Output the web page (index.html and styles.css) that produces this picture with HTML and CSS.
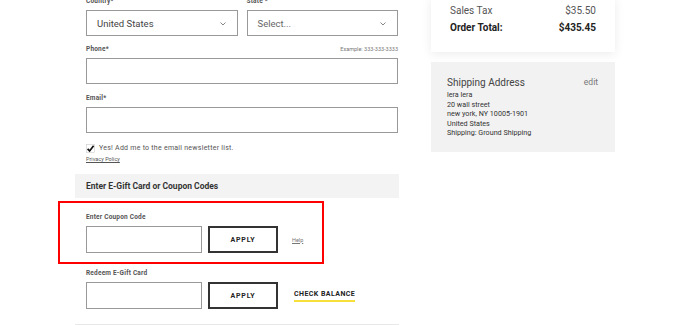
FILE: index.html
```html
<!DOCTYPE html>
<html lang="en">
<head>
    <meta charset="UTF-8">
    <meta name="viewport" content="width=device-width, initial-scale=1.0">
    <title>Checkout</title>
    <link rel="stylesheet" href="styles.css">
</head>
<body>
    <div class="page">
        <div class="checkout">
            <div class="form">
                <div class="row-two">
                    <div class="field">
                        <label>Country*</label>
                        <div class="select">
                            <span>United States</span>
                            <svg class="chev" width="6" height="4" viewBox="0 0 6 4"><polyline points="0.5,0.5 3,3 5.5,0.5" fill="none" stroke="#777" stroke-width="0.9"/></svg>
                        </div>
                    </div>
                    <div class="field">
                        <label>State *</label>
                        <div class="select placeholder">
                            <span>Select...</span>
                            <svg class="chev" width="6" height="4" viewBox="0 0 6 4"><polyline points="0.5,0.5 3,3 5.5,0.5" fill="none" stroke="#777" stroke-width="0.9"/></svg>
                        </div>
                    </div>
                </div>

                <div class="field">
                    <div class="label-row">
                        <label>Phone*</label>
                        <span class="hint">Example: 333-333-3333</span>
                    </div>
                    <div class="input"></div>
                </div>

                <div class="field">
                    <label>Email*</label>
                    <div class="input"></div>
                </div>

                <div class="newsletter">
                    <svg class="check" width="9" height="9" viewBox="0 0 9 9">
                        <rect x="0.5" y="0.5" width="8" height="8" fill="#fff" stroke="#ccc" stroke-width="0.6"/>
                        <path d="M1.6 4.8 L3.6 6.9 L7.6 1.8" fill="none" stroke="#111" stroke-width="1.7"/>
                    </svg>
                    <span>Yes! Add me to the email newsletter list.</span>
                </div>
                <a class="privacy" href="#">Privacy Policy</a>
            </div>

            <div class="band">Enter E-Gift Card or Coupon Codes</div>

            <div class="codes">
                <div class="code-group">
                    <div class="highlight"></div>
                    <label>Enter Coupon Code</label>
                    <div class="code-row">
                        <div class="input code-input"></div>
                        <button class="apply">APPLY</button>
                        <a class="help" href="#">Help</a>
                    </div>
                </div>
                <div class="code-group">
                    <label>Redeem E-Gift Card</label>
                    <div class="code-row">
                        <div class="input code-input"></div>
                        <button class="apply">APPLY</button>
                        <a class="balance" href="#">CHECK BALANCE</a>
                    </div>
                </div>
            </div>
            <div class="divider"></div>
        </div>

        <div class="sidebar">
            <div class="summary">
                <div class="sum-row">
                    <span>Sales Tax</span>
                    <span>$35.50</span>
                </div>
                <div class="sum-row total">
                    <span>Order Total:</span>
                    <span>$435.45</span>
                </div>
            </div>

            <div class="ship">
                <div class="ship-head">
                    <span class="ship-title">Shipping Address</span>
                    <a class="edit" href="#">edit</a>
                </div>
                <div class="ship-lines">
                    <div>lera lera</div>
                    <div>20 wall street</div>
                    <div>new york, NY 10005-1901</div>
                    <div>United States</div>
                    <div>Shipping: Ground Shipping</div>
                </div>
            </div>
        </div>
    </div>
</body>
</html>
```

FILE: styles.css
```css
body {
    margin: 0;
    padding: 0;
    background: #fff;
    color: #333;
    font-family: Roboto, 'Liberation Sans', Arial, sans-serif;
}

.page {
    display: flex;
    gap: 32px;
    margin-top: -3px;
    padding-left: 75px;
}

/* left column */
.checkout {
    width: 324px;
}

.form {
    padding: 0 1px 0 11px;
}

.row-two {
    display: flex;
    gap: 9px;
    margin-bottom: 9px;
}

.row-two .field {
    flex: 1;
    margin-bottom: 0;
}

.field {
    margin-bottom: 10px;
}

label {
    display: block;
    font-size: 6.5px;
    line-height: 9px;
    font-weight: bold;
    color: #555;
    letter-spacing: 0.2px;
    margin-bottom: 4px;
}

.label-row {
    display: flex;
    justify-content: space-between;
    align-items: baseline;
}

.hint {
    font-size: 5.5px;
    color: #777;
}

.select {
    height: 26px;
    border: 1px solid #999;
    box-sizing: border-box;
    display: flex;
    align-items: center;
    justify-content: space-between;
    padding: 0 11px 0 10px;
    font-size: 9.5px;
    color: #444;
}

.select.placeholder {
    color: #666;
}

.chev {
    margin-top: 2px;
}

.input {
    height: 26px;
    border: 1px solid #999;
    box-sizing: border-box;
    background: #fff;
}

.newsletter {
    display: flex;
    align-items: center;
    gap: 4px;
    font-size: 7px;
    line-height: 10px;
    letter-spacing: 0.25px;
    color: #555;
    margin-top: 9px;
}

.privacy {
    display: block;
    font-size: 5.5px;
    line-height: 8px;
    color: #555;
    margin-top: 2px;
}

.band {
    margin-top: 11px;
    height: 24px;
    line-height: 24px;
    background: #f3f3f3;
    padding-left: 11px;
    font-size: 8.5px;
    font-weight: bold;
    color: #333;
}

.codes {
    padding: 15px 0 0 11px;
}

.code-group {
    position: relative;
    margin-bottom: 16px;
}

.code-group:last-child {
    margin-bottom: 15px;
}

.highlight {
    position: absolute;
    top: -12px;
    left: -28px;
    width: 266px;
    height: 63px;
    border: 2px solid #f00;
    box-sizing: border-box;
}

.code-row {
    display: flex;
    align-items: center;
}

.code-input {
    width: 116px;
    height: 27px;
}

.apply {
    width: 70px;
    height: 27px;
    margin-left: 6px;
    border: 2px solid #333;
    background: #fff;
    font-family: Roboto, 'Liberation Sans', Arial, sans-serif;
    font-size: 7px;
    font-weight: bold;
    letter-spacing: 0.8px;
    color: #222;
    padding: 0;
}

.help {
    margin-left: 14px;
    font-size: 5.5px;
    color: #777;
}

.balance {
    margin-left: 16px;
    font-size: 7px;
    font-weight: bold;
    letter-spacing: 0.45px;
    color: #222;
    text-decoration: none;
    border-bottom: 2px solid #f7e03c;
    line-height: 9px;
    padding-bottom: 1px;
    margin-top: 1px;
}

.divider {
    border-top: 1px solid #e8e8e8;
}

/* right column */
.sidebar {
    width: 184px;
}

.summary {
    background: #fff;
    box-shadow: 0 2px 10px rgba(0, 0, 0, 0.08);
    padding: 4.5px 19px 16.5px;
}

.sum-row {
    display: flex;
    justify-content: space-between;
    font-size: 10px;
    line-height: 17px;
    color: #555;
}

.sum-row.total {
    font-weight: bold;
    color: #222;
}

.ship {
    margin-top: 10px;
    background: #f2f2f2;
    padding: 13.5px 17px 14px 16px;
}

.ship-head {
    display: flex;
    justify-content: space-between;
    line-height: 13px;
}

.ship-title {
    font-size: 10px;
    color: #444;
}

.edit {
    font-size: 8.5px;
    color: #777;
    text-decoration: none;
}

.ship-lines {
    margin-top: 1.5px;
    font-size: 7.2px;
    line-height: 9.6px;
    color: #333;
}
```
